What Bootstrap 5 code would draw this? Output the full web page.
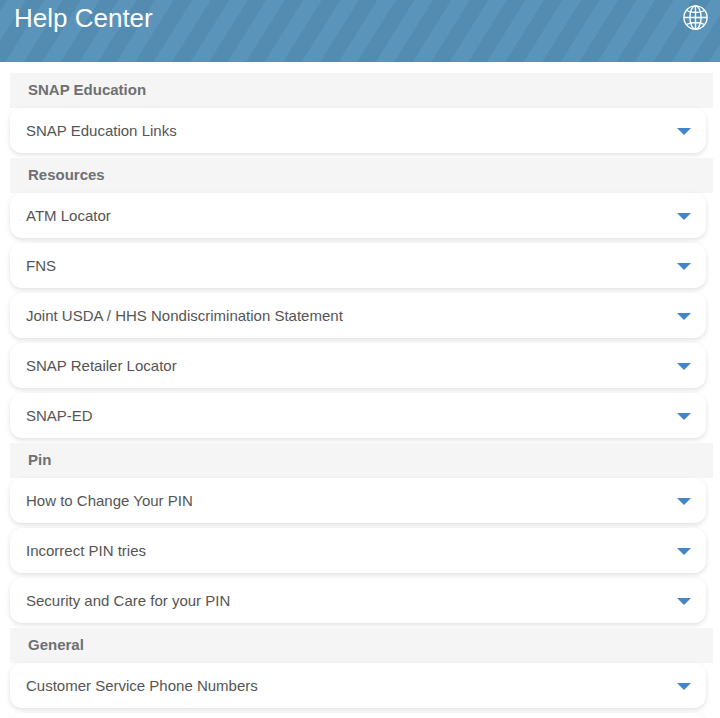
<!DOCTYPE html>
<html lang="en">
<head>
<meta charset="utf-8">
<title>Help Center</title>
<link href="https://cdn.jsdelivr.net/npm/bootstrap@5.3.0/dist/css/bootstrap.min.css" rel="stylesheet">
<style>
html,body{height:718px;overflow:hidden;background:#fff;}
body{font-family:"Liberation Sans",Arial,sans-serif;color:#555;}
.hc-top{height:62px;color:#fff;padding:0 12px 0 14px;background:repeating-linear-gradient(122deg,#548bb1 0,#548bb1 6px,#5b94bb 6px,#5b94bb 21.7px,#548bb1 21.7px,#548bb1 31.4px);}
.hc-title{font-size:26px;line-height:36px;font-weight:400;margin:0;}
.hc-globe{width:25px;height:25px;margin-top:5px;}
.hc-body{padding:11px 7px 0 10px;}
.hc-head{height:35px;background:#f5f5f5;color:#6e7073;font-size:15px;font-weight:700;line-height:34px;padding-left:18px;}
.hc-item{height:45px;margin:0 7px 5px 0;padding:2px 15px 0 16px;background:#fff;border:0;border-radius:12px;box-shadow:0 2px 5px rgba(0,0,0,.12);font-size:15px;color:#555;}
.hc-caret{width:0;height:0;border-left:7px solid transparent;border-right:7px solid transparent;border-top:7px solid #4484c8;}
</style>
</head>
<body>
<header class="hc-top d-flex justify-content-between align-items-start">
  <h1 class="hc-title">Help Center</h1>
  <svg class="hc-globe" viewBox="0 0 25 25" fill="none" stroke="#fff" stroke-width="1.4" aria-label="Language">
    <circle cx="12.5" cy="12.5" r="11.6"/>
    <ellipse cx="12.5" cy="12.5" rx="5.6" ry="11.6"/>
    <path d="M12.5 1v23M1 12.5h23M3.4 5.5c5 2.600 13.200 2.600 18.200 0M3.400 19.500c5-2.600 13.200-2.600 18.200 0"/>
  </svg>
</header>
<main class="hc-body">
  <div class="hc-head">SNAP Education</div>
  <div class="hc-item d-flex justify-content-between align-items-center"><span>SNAP Education Links</span><span class="hc-caret"></span></div>
  <div class="hc-head">Resources</div>
  <div class="hc-item d-flex justify-content-between align-items-center"><span>ATM Locator</span><span class="hc-caret"></span></div>
  <div class="hc-item d-flex justify-content-between align-items-center"><span>FNS</span><span class="hc-caret"></span></div>
  <div class="hc-item d-flex justify-content-between align-items-center"><span>Joint USDA / HHS Nondiscrimination Statement</span><span class="hc-caret"></span></div>
  <div class="hc-item d-flex justify-content-between align-items-center"><span>SNAP Retailer Locator</span><span class="hc-caret"></span></div>
  <div class="hc-item d-flex justify-content-between align-items-center"><span>SNAP-ED</span><span class="hc-caret"></span></div>
  <div class="hc-head">Pin</div>
  <div class="hc-item d-flex justify-content-between align-items-center"><span>How to Change Your PIN</span><span class="hc-caret"></span></div>
  <div class="hc-item d-flex justify-content-between align-items-center"><span>Incorrect PIN tries</span><span class="hc-caret"></span></div>
  <div class="hc-item d-flex justify-content-between align-items-center"><span>Security and Care for your PIN</span><span class="hc-caret"></span></div>
  <div class="hc-head">General</div>
  <div class="hc-item d-flex justify-content-between align-items-center"><span>Customer Service Phone Numbers</span><span class="hc-caret"></span></div>
  <div class="hc-item d-flex justify-content-between align-items-center"></div>
</main>
<script src="https://cdn.jsdelivr.net/npm/bootstrap@5.3.0/dist/js/bootstrap.bundle.min.js"></script>
</body>
</html>
